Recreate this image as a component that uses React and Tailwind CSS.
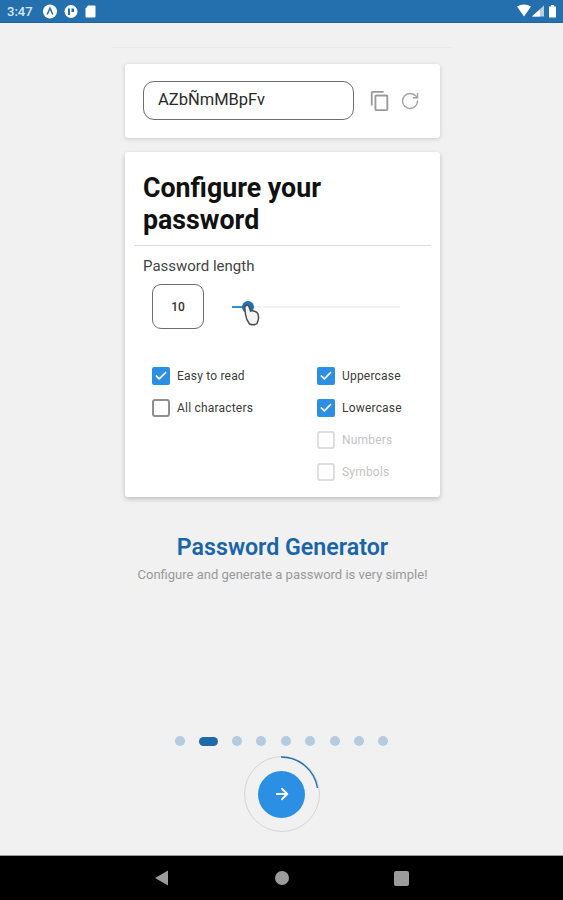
import { ArrowRight, Check, RotateCw } from 'lucide-react';

function CheckRow({ label, checked, disabled }) {
  return (
    <div className="flex h-[18px] items-center gap-[7px]">
      {checked ? (
        <div className="flex size-[18px] items-center justify-center rounded-[2px] bg-[#2b8fe3]">
          <Check className="size-[14px] text-white" strokeWidth={3} />
        </div>
      ) : (
        <div
          className={`size-[18px] rounded-[3px] border-2 ${disabled ? 'border-[#dedede]' : 'border-[#8f8f8f]'}`}
        />
      )}
      <span className={`text-[12px] leading-none tracking-[0.2px] ${disabled ? 'text-[#c4c4c4]' : 'text-[#3c3c3c]'}`}>
        {label}
      </span>
    </div>
  );
}

function StatusBar() {
  return (
    <div className="flex h-[23px] shrink-0 items-center justify-between border-b border-[#1f64a0] bg-[#2470ae] pl-[7px] pr-[5px]">
      <div className="flex items-center gap-[10px]">
        <span className="text-[13px] font-medium leading-none text-[#dbe7f2]">3:47</span>
        <svg width="54" height="15" viewBox="0 0 54 15">
          <circle cx="7" cy="7.500" r="7" fill="#fff" />
          <path d="M4.200 10.500 7 4.200l2.800 6.300" fill="none" stroke="#2470ae" strokeWidth="1.500" />
          <circle cx="28" cy="7.500" r="6.500" fill="#fff" />
          <path d="M25 4.500h2v6.500h-2zM28.500 4.500h2.600v3.500h-2.600z" fill="#2470ae" />
          <path d="M45 1.500h6.500a1 1 0 0 1 1 1v10a1 1 0 0 1-1 1h-8a1 1 0 0 1-1-1V4.500z" fill="#fff" />
        </svg>
      </div>
      <svg width="41" height="14" viewBox="0 0 41 14">
        <path d="M0 2.500Q7-1.500 14 2.500L7 12.500z" fill="#fff" />
        <path d="M15 12.500 27 1.500v11z" fill="#b9cfe3" />
        <path d="M15 12.500 23 5.200v7.300z" fill="#fff" />
        <path d="M32 2.500h2V1h3v1.500h2v11h-7z" fill="#fff" />
      </svg>
    </div>
  );
}

function NavBar() {
  return (
    <div className="flex h-[45px] shrink-0 items-center justify-center gap-[105px] border-t border-[#9a9a9a] bg-black">
      <svg width="15" height="16" viewBox="0 0 15 16">
        <path d="M13 0.500v15L0 8z" fill="#9b9b9b" />
      </svg>
      <div className="size-[14px] rounded-full bg-[#9b9b9b]" />
      <div className="size-[15px] rounded-[2px] bg-[#9b9b9b]" />
    </div>
  );
}

export default function App() {
  const dots = [0, 1, 2, 3, 4, 5, 6, 7, 8];

  return (
    <div className="flex h-[900px] w-[563px] flex-col overflow-hidden bg-[#f1f1f1] font-['Roboto',sans-serif]">
      <StatusBar />

      <main className="flex flex-1 flex-col items-center">
        <div className="mt-[24px] h-px w-[340px] bg-[#ebebeb]" />

        <section className="ml-[2px] mt-[16px] flex h-[74px] w-[315px] items-center rounded-[3px] bg-white pb-px pl-[18px] shadow-[0_1px_4px_rgba(0,0,0,0.16)]">
          <div className="flex h-[39px] w-[211px] items-center rounded-[11px] border-[1.5px] border-[#6e6e6e] pl-[14px] text-[16.500px] text-[#2a2a2a]">
            AZbÑmMBpFv
          </div>
          <svg className="ml-[15px]" width="22" height="22" viewBox="0 0 24 24">
            <path
              d="M16 1H4c-1.100 0-2 .9-2 2v14h2V3h12V1zm3 4H8c-1.100 0-2 .9-2 2v14c0 1.100.9 2 2 2h11c1.100 0 2-.9 2-2V7c0-1.100-.9-2-2-2zm0 16H8V7h11v14z"
              fill="#9a9a9a"
            />
          </svg>
          <RotateCw className="ml-[9px] size-[20px] text-[#a3a3a3]" strokeWidth={1.7} />
        </section>

        <section className="ml-[2px] mt-[14px] h-[345px] w-[315px] rounded-[3px] bg-white px-[9px] pt-[20px] shadow-[0_2px_5px_rgba(0,0,0,0.22)]">
          <h1 className="pl-[9px] text-[26.750px] font-bold leading-[32px] text-[#111]">
            Configure your
            <br />
            password
          </h1>
          <div className="mt-[9px] h-px bg-[#dcdcdc]" />
          <p className="mt-[12px] pl-[9px] text-[15px] leading-[16px] text-[#444]">Password length</p>

          <div className="mt-[10px] flex items-center pl-[18px]">
            <div className="flex h-[45px] w-[52px] items-center justify-center rounded-[9px] border-[1.5px] border-[#6e6e6e] text-[12px] font-medium text-[#333]">
              10
            </div>
            <div className="relative ml-[28px] flex h-[2px] w-[168px] bg-[#f3f3f3]">
              <div className="h-[2px] w-[16px] bg-[#2b8fe3]" />
              <div className="absolute left-[10px] top-[-5px] size-[12px] rounded-full bg-[#1f6fb5]" />
              <svg className="absolute left-[11px] top-[-2px]" width="18" height="22" viewBox="0 0 18 22">
                <path
                  d="M3 1.500c1.300-.8 2.500 0 3 1.200l1.600 4.300c2.500-.6 6 .6 7 2.300.8 1.600 1.200 4.500.6 6.700l-1.200 3.500c-2 1.400-5.500 1.400-7.500.5C4.500 17.500 3 14 2.500 10.500L1.800 4c-.1-1 .3-2 1.200-2.500z"
                  fill="#f4f4f4"
                  stroke="#4d4d4d"
                  strokeWidth="1.500"
                />
              </svg>
            </div>
          </div>

          <div className="mt-[38px] grid grid-cols-[165px_1fr] pl-[18px]">
            <div className="flex flex-col gap-[14px]">
              <CheckRow label="Easy to read" checked />
              <CheckRow label="All characters" />
            </div>
            <div className="flex flex-col gap-[14px]">
              <CheckRow label="Uppercase" checked />
              <CheckRow label="Lowercase" checked />
              <CheckRow label="Numbers" disabled />
              <CheckRow label="Symbols" disabled />
            </div>
          </div>
        </section>

        <h2 className="ml-[2px] mt-[36px] text-[23.200px] font-semibold leading-[28px] text-[#1a64a8]">Password Generator</h2>
        <p className="ml-[2px] mt-[6px] text-[13px] leading-[16px] text-[#999]">Configure and generate a password is very simple!</p>

        <div className="mt-[153px] flex items-center">
          {dots.map((dot) =>
            dot === 1 ? (
              <div key={dot} className="ml-[14px] h-[9px] w-[19px] rounded-full bg-[#1f68a9]" />
            ) : (
              <div key={dot} className="ml-[14.400px] size-[10px] rounded-full bg-[#b4cbe0] first:ml-0" />
            ),
          )}
        </div>

        <div className="relative mt-[10px] flex size-[76px] items-center justify-center rounded-full border-[1.5px] border-[#d6d6d6]">
          <svg className="absolute inset-[-1.500px]" width="76" height="76" viewBox="0 0 76 76">
            <path d="M38 1A37 37 0 0 1 74.500 32" fill="none" stroke="#2470ae" strokeWidth="1.500" />
          </svg>
          <div className="flex size-[47px] items-center justify-center rounded-full bg-[#2b8fe3]">
            <ArrowRight className="size-[18px] text-white" strokeWidth={2.500} />
          </div>
        </div>
      </main>

      <NavBar />
    </div>
  );
}
